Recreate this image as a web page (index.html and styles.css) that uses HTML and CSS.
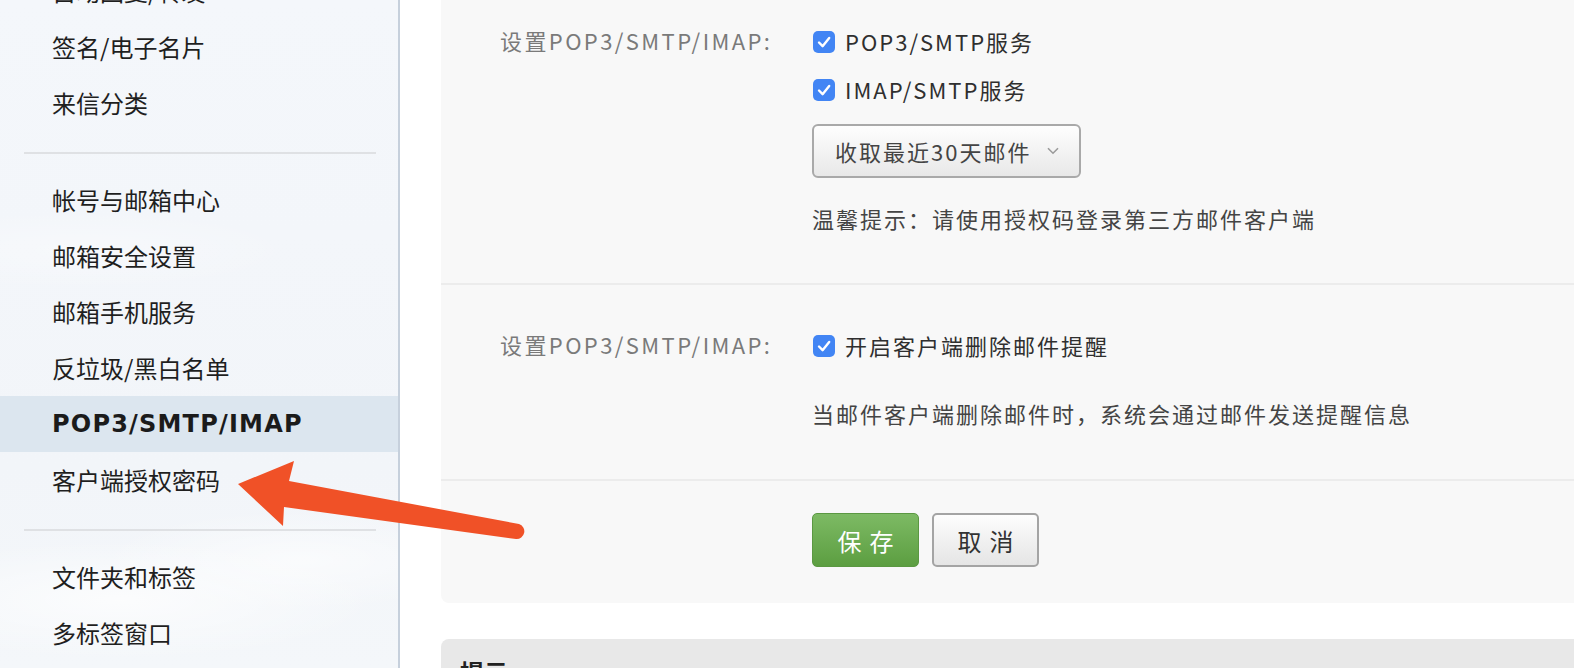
FILE: index.html
```html
<!DOCTYPE html>
<html lang="zh-CN">
<head>
<meta charset="utf-8">
<title>POP3/SMTP/IMAP 设置</title>
<link rel="stylesheet" href="styles.css">
</head>
<body>
<div class="page">
  <aside class="sidebar">
    <ul class="nav nav-first">
      <li class="nav-item">自动回复/转发</li>
      <li class="nav-item">签名/电子名片</li>
      <li class="nav-item">来信分类</li>
    </ul>
    <div class="nav-divider"></div>
    <ul class="nav">
      <li class="nav-item">帐号与邮箱中心</li>
      <li class="nav-item">邮箱安全设置</li>
      <li class="nav-item">邮箱手机服务</li>
      <li class="nav-item">反垃圾/黑白名单</li>
      <li class="nav-item active">POP3/SMTP/IMAP</li>
      <li class="nav-item">客户端授权密码</li>
    </ul>
    <div class="nav-divider"></div>
    <ul class="nav">
      <li class="nav-item">文件夹和标签</li>
      <li class="nav-item">多标签窗口</li>
    </ul>
  </aside>

  <main class="main">
    <div class="panel">
      <section class="field field-first">
        <div class="label">设置POP3/SMTP/IMAP:</div>
        <div class="controls">
          <label class="check-row"><span class="check"><svg viewBox="0 0 22 22" width="22" height="22"><path d="M6 11.5 L9.6 15.2 L16.2 7" fill="none" stroke="#fff" stroke-width="2.4" stroke-linecap="round" stroke-linejoin="round"/></svg></span><span class="check-text">POP3/SMTP服务</span></label>
          <label class="check-row"><span class="check"><svg viewBox="0 0 22 22" width="22" height="22"><path d="M6 11.5 L9.6 15.2 L16.2 7" fill="none" stroke="#fff" stroke-width="2.4" stroke-linecap="round" stroke-linejoin="round"/></svg></span><span class="check-text">IMAP/SMTP服务</span></label>
          <div class="select"><span class="select-text">收取最近30天邮件</span><svg class="chevron" viewBox="0 0 12 8" width="12" height="8"><path d="M1 1.2 L6 6.2 L11 1.2" fill="none" stroke="#9a9a9a" stroke-width="1.6"/></svg></div>
          <p class="tip tip-first">温馨提示：请使用授权码登录第三方邮件客户端</p>
        </div>
      </section>

      <section class="field field-second">
        <div class="label">设置POP3/SMTP/IMAP:</div>
        <div class="controls">
          <label class="check-row"><span class="check"><svg viewBox="0 0 22 22" width="22" height="22"><path d="M6 11.5 L9.6 15.2 L16.2 7" fill="none" stroke="#fff" stroke-width="2.4" stroke-linecap="round" stroke-linejoin="round"/></svg></span><span class="check-text">开启客户端删除邮件提醒</span></label>
          <p class="tip tip-second">当邮件客户端删除邮件时，系统会通过邮件发送提醒信息</p>
        </div>
      </section>

      <section class="field field-actions">
        <div class="label"></div>
        <div class="actions">
          <button class="btn btn-save"><span>保</span><span>存</span></button>
          <button class="btn btn-cancel"><span>取</span><span>消</span></button>
        </div>
      </section>
    </div>

    <section class="notice">
      <h3 class="notice-title">提示</h3>
    </section>
  </main>

  <svg class="annotation" viewBox="0 0 1574 668" width="1574" height="668">
    <path d="M238 484 L294 461 L289 481 L519 524 A7.7 7.7 0 0 1 516 539 L284 507 L283 526 Z" fill="#f05127"/>
  </svg>
</div>
</body>
</html>
```

FILE: styles.css
```css
html, body {
  margin: 0;
  padding: 0;
  height: 668px;
  overflow: hidden;
  background: #ffffff;
  font-family: "Noto Sans CJK SC", "Noto Sans", sans-serif;
}

.page {
  position: relative;
  display: flex;
  height: 668px;
}

/* ---------- sidebar ---------- */
.sidebar {
  flex: none;
  width: 398px;
  border-right: 2px solid #c6d0dc;
  background:
    radial-gradient(ellipse 260px 60px at 120px 600px, rgba(255,255,255,0.7), rgba(255,255,255,0)),
    radial-gradient(ellipse 200px 50px at 300px 560px, rgba(255,255,255,0.6), rgba(255,255,255,0)),
    radial-gradient(ellipse 220px 40px at 80px 250px, rgba(255,255,255,0.35), rgba(255,255,255,0)),
    linear-gradient(#f4f7fb, #f2f5f9 70%, #f4f7fa);
  overflow: hidden;
}

.nav {
  list-style: none;
  margin: 0;
  padding: 0;
}

.nav-first {
  margin-top: -37px;
}

.nav-item {
  height: 56px;
  line-height: 56px;
  padding-left: 52px;
  font-size: 24px;
  color: #1f1f1f;
  white-space: nowrap;
}

.nav-item.active {
  background: #dce6ef;
  font-family: "DejaVu Sans", "Noto Sans", sans-serif;
  font-weight: bold;
  letter-spacing: 1.2px;
  color: #1b1b1b;
}

.nav-divider {
  height: 2px;
  background: #dfe1e4;
  margin: 21px 22px 18px 24px;
}

/* ---------- main ---------- */
.main {
  flex: 1;
  min-width: 0;
  padding-left: 41px;
}

.panel {
  background: #f8f8f8;
  border-radius: 0 0 0 8px;
}

.field {
  display: grid;
  grid-template-columns: 312px 1fr;
  padding-left: 59px;
  border-bottom: 2px solid #ececec;
}

.field-first {
  padding-top: 18px;
  padding-bottom: 49px;
}

.field-second {
  padding-top: 37px;
  padding-bottom: 50px;
}

.field-actions {
  padding-top: 32px;
  padding-bottom: 36px;
  border-bottom: 0;
}

.label {
  font-size: 22px;
  line-height: 44px;
  letter-spacing: 2.4px;
  color: #7a7a7a;
  white-space: nowrap;
}

.controls {
  display: flex;
  flex-direction: column;
  align-items: flex-start;
}

.check-row {
  display: flex;
  align-items: center;
  height: 48px;
}

.check {
  flex: none;
  width: 22px;
  height: 22px;
  margin-left: 1px;
  margin-right: 10px;
  border-radius: 5px;
  background: #4285f4;
  display: flex;
}

.check-text {
  margin-top: -3px;
  font-size: 22px;
  letter-spacing: 2px;
  color: #2f2f2f;
  white-space: nowrap;
}

.select {
  box-sizing: border-box;
  display: flex;
  align-items: center;
  width: 269px;
  height: 54px;
  margin-top: 10px;
  padding-left: 21px;
  border: 2px solid #a9a9a9;
  border-radius: 6px;
  background: linear-gradient(#fefefe, #e8e8e8);
}

.select-text {
  font-size: 22px;
  letter-spacing: 2px;
  color: #444;
  white-space: nowrap;
}

.chevron {
  margin-left: 16px;
}

.tip {
  margin: 0;
  font-size: 22px;
  line-height: 32px;
  letter-spacing: 2px;
  color: #444;
  white-space: nowrap;
}

.tip-first {
  margin-top: 24px;
}

.tip-second {
  margin-top: 27px;
}

.actions {
  display: flex;
  gap: 13px;
}

.btn {
  box-sizing: border-box;
  display: flex;
  align-items: center;
  justify-content: center;
  gap: 8px;
  width: 107px;
  height: 54px;
  padding: 0;
  border-radius: 5px;
  font-family: "Noto Sans CJK SC", sans-serif;
  font-size: 24px;
}

.btn-save {
  border: 1px solid #5b9842;
  background: linear-gradient(#7dba64, #5c9e41);
  color: #ffffff;
}

.btn-cancel {
  width: 107px;
  border: 2px solid #a4a4a4;
  background: linear-gradient(#fdfdfd, #e5e5e5);
  color: #333;
}

.notice {
  margin-top: 36px;
  height: 120px;
  background: #e8e8e8;
  border-radius: 8px 0 0 0;
  padding: 15px 19px;
}

.notice-title {
  margin: 0;
  font-size: 24px;
  font-weight: bold;
  color: #222;
}

/* ---------- annotation overlay ---------- */
.annotation {
  position: absolute;
  left: 0;
  top: 0;
  pointer-events: none;
}
```
